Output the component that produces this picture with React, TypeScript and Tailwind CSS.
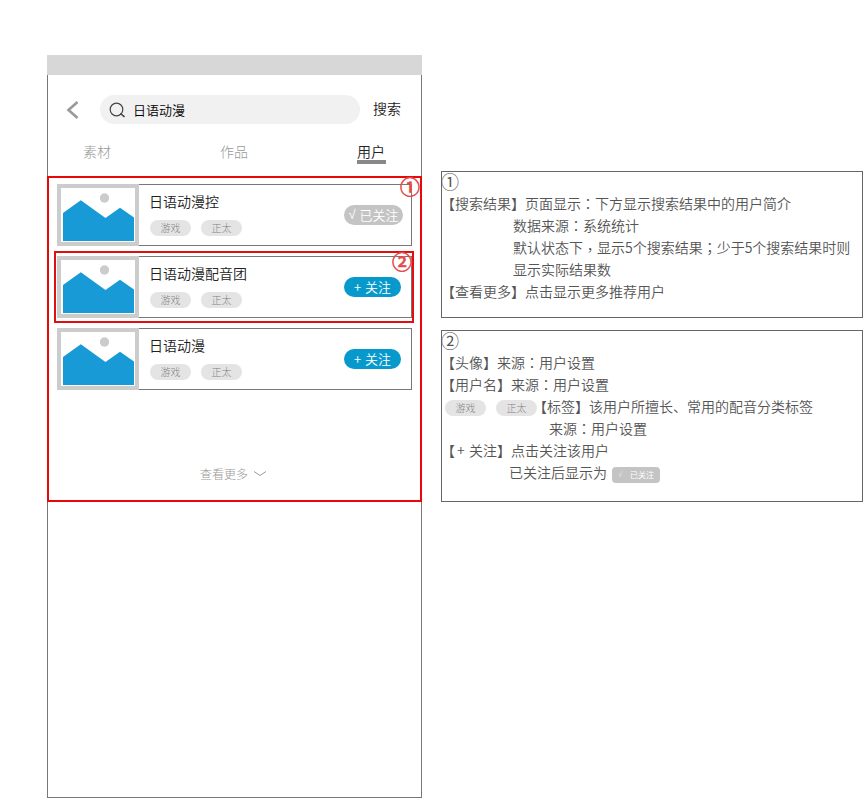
import type { ReactNode } from "react";

function Tag({ children }: { children: ReactNode }) {
  return (
    <span className="flex h-4 w-[41px] shrink-0 items-center justify-center rounded-full bg-[#e4e4e4] text-[10px] leading-none text-[#808080]">
      {children}
    </span>
  );
}

function Avatar() {
  return (
    <svg className="h-[62px] w-[82px] shrink-0" viewBox="0 0 82 62">
      <rect width="82" height="62" fill="#ccc" />
      <rect x="4" y="4" width="74" height="54" fill="#fff" />
      <circle cx="47.5" cy="14" r="4.7" fill="#ccc" />
      <path d="M6 29L23.800 16.300L48.500 34L63 23.800L77 33.500V57H6Z" fill="#189ad6" />
    </svg>
  );
}

function Badge({ children }: { children: ReactNode }) {
  return (
    <span className="-mt-px text-[20px] leading-5 font-medium text-[#e64b4b] [-webkit-text-stroke:0.6px_#e64b4b]">
      {children}
    </span>
  );
}

function UserCard({ name, followed, marked }: { name: string; followed?: boolean; marked?: boolean }) {
  return (
    <div className="relative flex h-[62px] w-[355px]">
      <Avatar />
      <div className="flex flex-1 border-y border-r border-[#777] pl-[11px]">
        <div className="flex flex-1 flex-col pt-[6px]">
          <div className="-ml-px text-[14px] leading-5 font-[350] text-[#222]">{name}</div>
          <div className="mt-[9px] flex gap-2.5">
            <Tag>游戏</Tag>
            <Tag>正太</Tag>
          </div>
        </div>
        {followed ? (
          <button className="mt-5 mr-2 flex h-5 w-[59px] items-center justify-center rounded-full bg-[#c4c4c4] pb-0.5 text-[13px] leading-none font-[350] whitespace-pre text-white">
            <span className="mr-1 font-['Liberation_Sans',sans-serif]">√</span>已关注
          </button>
        ) : (
          <button className="mt-5 mr-2.5 flex h-5 w-[57px] items-center justify-center rounded-full bg-[#0899cc] pb-0.5 text-[13px] leading-none font-[350] whitespace-pre text-white">
            <span className="mr-1">+</span>关注
          </button>
        )}
      </div>
      {marked && (
        <div className="absolute -top-[5px] -left-[3px] h-[72px] w-[360px] border-2 border-[#e01010]">
          <div className="absolute top-0 right-0 flex">
            <Badge>②</Badge>
          </div>
        </div>
      )}
    </div>
  );
}

function P({ children }: { children: string }) {
  return <span className="font-['Noto_Sans_CJK_TC',sans-serif]">{children}</span>;
}

function Line({ children, className = "" }: { children: ReactNode; className?: string }) {
  return <div className={`flex h-[22px] items-center pb-1 whitespace-pre ${className}`}>{children}</div>;
}

export default function App() {
  return (
    <div className="flex h-[798px] w-[863px] items-start overflow-hidden bg-white pt-[55px] pl-[47px] font-['Noto_Sans_CJK_SC',sans-serif] font-light" lang="zh-CN">
      <main className="h-[743px] w-[375px] shrink-0">
        <div className="h-5 bg-[#d7d7d7]" />
        <div className="h-[723px] border-x border-b border-[#777]">
          <div className="flex h-[69px] items-center pl-[18px]">
            <svg className="h-5 w-[14px]" viewBox="0 0 14 20" fill="none" stroke="#999" strokeWidth="2.600">
              <path d="M11.500 2L2.500 10L11.500 18" />
            </svg>
            <div className="ml-[20px] flex h-[29px] w-[260px] items-center rounded-full bg-[#f1f1f1] pl-[9px] text-[13px] font-[350] text-black">
              <svg className="mr-2 h-4 w-4" viewBox="0 0 16 16" fill="none" stroke="#444" strokeWidth="1.200">
                <circle cx="7.500" cy="7.500" r="6.300" />
                <path d="M11.500 11.500L15.500 15" strokeWidth="1.600" />
              </svg>
              日语动漫
            </div>
            <span className="ml-[13px] pb-0.5 text-[14px] font-[350] text-[#222]">搜索</span>
          </div>
          <nav className="flex h-8 justify-between pr-[35px] pl-[35px] text-[14px] leading-[14px] text-[#999]">
            <span>素材</span>
            <span>作品</span>
            <span className="h-[20px] w-[29px] border-b-4 border-[#888] font-[350] text-[#222]">用户</span>
          </nav>
          <section className="relative -mx-px flex h-[326px] flex-col border-2 border-[#e80808] pt-[6px] pl-2">
            <div className="flex flex-col gap-2.5">
              <UserCard name="日语动漫控" followed />
              <UserCard name="日语动漫配音团" marked />
              <UserCard name="日语动漫" />
            </div>
            <div className="mt-[76px] ml-[143px] flex items-center gap-[5px] text-[12px] leading-4 text-[#999]">
              查看更多
              <svg className="h-2 w-[14px]" viewBox="0 0 14 8" fill="none" stroke="currentColor">
                <path d="M1 1.500L7 5.500L13 1.500" />
              </svg>
            </div>
            <div className="absolute top-0 right-0 flex">
              <Badge>①</Badge>
            </div>
          </section>
        </div>
      </main>
      <aside className="ml-[19px] mt-[116px] flex w-[422px] shrink-0 flex-col gap-3 text-[14px] font-[350] text-[#555]">
        <section className="h-[147px] border border-[#666]">
          <div className="-ml-px">
            <Line className="text-[18px] font-normal">①</Line>
            <Line>【搜索结果】页面显示<P>：</P>下方显示搜索结果中的用户简介</Line>
            <Line className="pl-[72px]">数据来源<P>：</P>系统统计</Line>
            <Line className="pl-[72px]">
              默认状态下<span className="relative top-0.5"><P>，</P></span>显示5个搜索结果<P>；</P>少于5个搜索结果时则
            </Line>
            <Line className="pl-[72px]">显示实际结果数</Line>
            <Line>【查看更多】点击显示更多推荐用户</Line>
          </div>
        </section>
        <section className="h-[172px] border border-[#666]">
          <div className="-ml-px">
            <Line className="text-[18px] font-normal">②</Line>
            <Line>【头像】来源<P>：</P>用户设置</Line>
            <Line>【用户名】来源<P>：</P>用户设置</Line>
            <Line className="pl-1">
              <span className="mt-1 flex gap-2.5 font-light">
                <Tag>游戏</Tag>
                <Tag>正太</Tag>
              </span>
              <span className="-ml-1">【标签】该用户所擅长、常用的配音分类标签</span>
            </Line>
            <Line className="pl-[108px]">来源<P>：</P>用户设置</Line>
            <Line>
              【<span className="w-3.5 pl-0.5">+</span>关注】点击关注该用户
            </Line>
            <Line className="pl-[68px]">
              已关注后显示为
              <span className="mt-1.5 ml-[5px] flex h-4 w-12 items-center justify-center rounded bg-[#c4c4c4] pb-px text-[8px] leading-none font-normal text-white">
                <span className="mr-1.5 font-['Liberation_Sans',sans-serif] opacity-60">√</span> 已关注
              </span>
            </Line>
          </div>
        </section>
      </aside>
    </div>
  );
}
